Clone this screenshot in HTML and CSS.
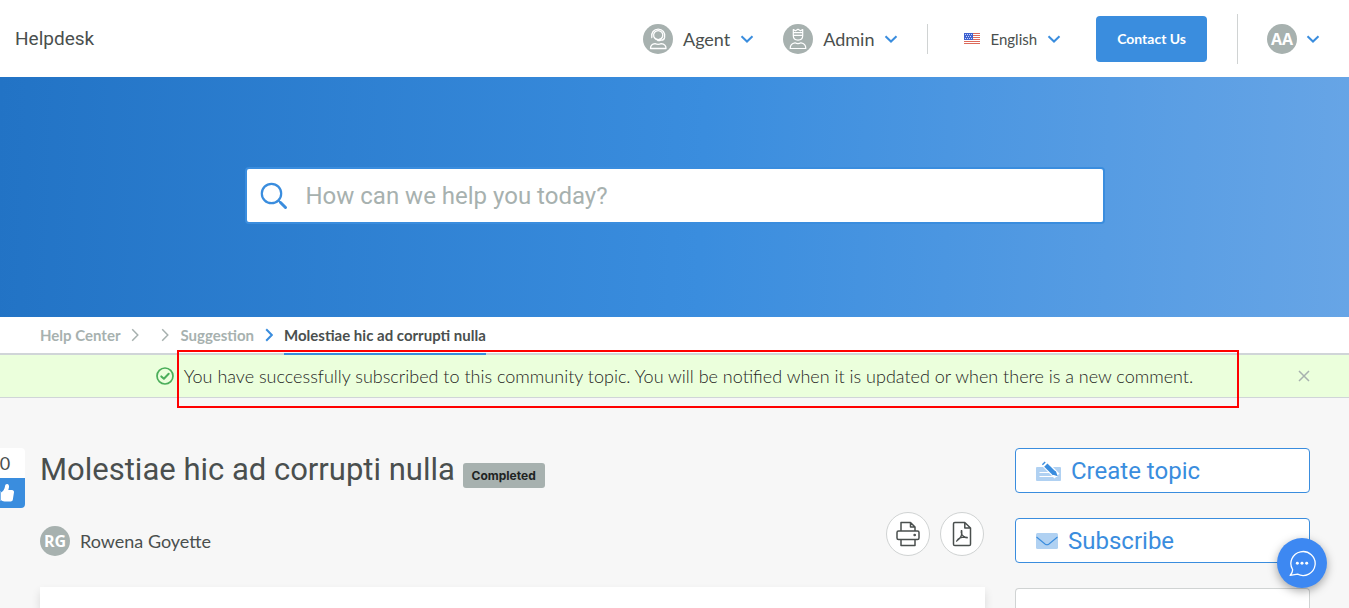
FILE: index.html
```html
<!DOCTYPE html>
<html lang="en">
<head>
<meta charset="utf-8">
<meta name="viewport" content="width=device-width, initial-scale=1">
<title>Molestiae hic ad corrupti nulla - Helpdesk</title>
<link rel="stylesheet" href="styles.css">
</head>
<body>
<header class="topbar">
  <a class="brand" href="#">Helpdesk</a>
  <nav class="topnav">
    <button class="menu" type="button">
      <svg class="avatar" viewBox="0 0 30 30" fill="none" stroke="#fff" stroke-width="1.3" stroke-linecap="round" stroke-linejoin="round">
        <circle cx="15" cy="15" r="15" fill="#a7b1af" stroke="none"/>
        <path d="M8.800 13.500c-1-5 2.200-8.300 6.400-8.300s7.400 3.300 6.400 8.300c-.4 1.700-1.800 2.700-3.400 2.700h-2.600"/>
        <path d="M10.800 12.500a4.600 4.600 0 1 1 8.800 0c-.6 1.800-2.200 3.200-4.400 3.200s-3.800-1.400-4.400-3.200z"/>
        <path d="M15 16.200h1.800" stroke-width="2"/>
        <path d="M7.500 24.500c0-3 1.600-4.600 4.500-4.900 2 .9 4.300.9 6.300 0 2.900.3 4.700 1.900 4.700 4.900z"/>
      </svg>
      <span>Agent</span>
      <svg class="chevron" viewBox="0 0 14 8"><path d="M1.500 1.200 7 6.500l5.500-5.300"/></svg>
    </button>
    <button class="menu" type="button">
      <svg class="avatar" viewBox="0 0 30 30" fill="none" stroke="#fff" stroke-width="1.200" stroke-linecap="round" stroke-linejoin="round">
        <circle cx="15" cy="15" r="15" fill="#a7b1af" stroke="none"/>
        <path d="M10.300 5.600 12.500 6.800 15 5.200l2.500 1.600 2.200-1.200v6.200c0 2.600-2 4.300-4.700 4.300s-4.700-1.700-4.700-4.300zM10.300 8.700h9.400M10.300 11.400h9.400"/>
        <path d="M7.200 24.500c0-3.400 1.700-5.300 4.800-5.700 1.800 1.100 4.200 1.100 6 0 3.100.4 4.800 2.300 4.800 5.700z"/>
      </svg>
      <span>Admin</span>
      <svg class="chevron" viewBox="0 0 14 8"><path d="M1.500 1.200 7 6.500l5.500-5.300"/></svg>
    </button>
    <span class="rule"></span>
    <button class="menu language" type="button">
      <svg class="flag" viewBox="0 0 16 11">
        <path fill="#fff" d="M0 0h16v11H0z"/>
        <path stroke="#dd6a5b" d="M0 .5h16M0 2.500h16M0 4.500h16M0 6.500h16M0 8.500h16M0 10.500h16"/>
        <path fill="#3f62cf" d="M0 0h9v7H0z"/>
        <path stroke="#c7d5ff" stroke-dasharray="1 1" d="M1 1.500h7M2 3.500h6M1 5.500h7"/>
      </svg>
      <span>English</span>
      <svg class="chevron" viewBox="0 0 14 8"><path d="M1.500 1.200 7 6.500l5.500-5.300"/></svg>
    </button>
    <a class="contact" href="#">Contact Us</a>
    <span class="rule rule-tall"></span>
    <button class="menu account" type="button" aria-label="Account">
      <span class="initials">AA</span>
      <svg class="chevron" viewBox="0 0 14 8"><path d="M1.500 1.200 7 6.500l5.500-5.300"/></svg>
    </button>
  </nav>
</header>

<section class="hero">
  <form class="search" role="search">
    <label for="q" aria-label="Search">
      <svg class="search-icon" viewBox="0 0 28 28" fill="none" stroke="#3a8dde" stroke-linecap="round"><circle cx="11.500" cy="11.500" r="9.700" stroke-width="2.200"/><path d="m18.600 18.600 1.500 1.500" stroke-width="2"/><path d="m20.500 20.500 5 5" stroke-width="3"/></svg>
    </label>
    <input id="q" type="search" placeholder="How can we help you today?">
  </form>
</section>

<nav class="crumbs" aria-label="Breadcrumb">
  <a href="#">Help Center</a>
  <svg class="sep" viewBox="0 0 8 14"><path d="m1.200 1.200 5.600 5.800-5.600 5.800"/></svg>
  <svg class="sep" viewBox="0 0 8 14"><path d="m1.200 1.200 5.600 5.800-5.600 5.800"/></svg>
  <a href="#">Suggestion</a>
  <svg class="sep sep-active" viewBox="0 0 8 14"><path d="m1.200 1.200 5.600 5.800-5.600 5.800"/></svg>
  <span class="current">Molestiae hic ad corrupti nulla</span>
</nav>

<div class="alert" role="status">
  <p class="alert-text">
    <svg class="check" viewBox="0 0 18 18" fill="none" stroke="#4bae5a" stroke-linecap="round" stroke-linejoin="round"><circle cx="9" cy="9" r="8" stroke-width="1.700"/><path d="m5.300 9.400 2.600 2.400 4.800-5" stroke-width="2"/></svg>
    You have successfully subscribed to this community topic. You will be notified when it is updated or when there is a new comment.
  </p>
  <button class="close" type="button" aria-label="Close"><svg viewBox="0 0 12 12"><path d="m1 1 10 10M11 1 1 11"/></svg></button>
  <span class="highlight"></span>
</div>

<main class="page">
  <aside class="vote">
    <span class="count">0</span>
    <button class="like" type="button" aria-label="Like">
      <svg viewBox="0 0 20 20"><path fill="#b9d7f5" d="M1 8h4.500v10H1z"/><path fill="#fff" d="M6 9.500C8 8.500 9.500 6.500 10 3.500 10.200 1.700 11 1 12 1c1.700.1 2.200 1.600 2 3.200L13.300 7H17c1.300 0 2.100 1 2 2.200l-1.200 7.600C17.600 18 16.800 18.500 15.800 18.500H9.500C8 18.500 6.500 17.500 6 17z"/></svg>
    </button>
  </aside>

  <article class="topic">
    <h1 class="title">Molestiae hic ad corrupti nulla <span class="badge">Completed</span></h1>
    <div class="meta">
      <a class="author" href="#"><span class="initials">RG</span>Rowena Goyette</a>
      <div class="tools">
        <button class="round" type="button" aria-label="Print">
          <svg viewBox="0 0 24 26" fill="none" stroke="#4a4f4e" stroke-width="1.500" stroke-linejoin="round"><path d="M5 10V1.500h9.500L19 6v4M14.500 1.500V6H19"/><rect x="1" y="10" width="22" height="8.500" rx="1.500"/><path d="M5 18.500v6h14v-6"/><circle cx="18.700" cy="14" r=".6"/></svg>
        </button>
        <button class="round" type="button" aria-label="Download PDF">
          <svg viewBox="0 0 24 26" fill="none" stroke="#4a4f4e" stroke-width="1.500" stroke-linejoin="round" stroke-linecap="round"><path d="M4.800 1.500h10L20.500 7v16.200c0 .8-.5 1.300-1.300 1.300H4.800c-.8 0-1.300-.5-1.300-1.300V2.800c0-.8.5-1.300 1.300-1.300zM14.800 1.500V7h5.700"/><path d="M11.300 9.500c-.8 2.700 1.500 7.100 6 7.300M11.800 9.500c.7 4-1.800 8.300-5.300 10.700M7 19.500c1.500-2.500 5.500-3.700 10.300-3.200" stroke-width="1.200"/></svg>
        </button>
      </div>
    </div>
    <div class="card"></div>
  </article>

  <aside class="side">
    <a class="action" href="#">
      <svg width="25" height="20" viewBox="0 0 25 20"><rect y="6" width="25" height="14" rx="1" fill="#b0d1f2"/><path d="M3.500 11.500h12M3.500 15.500h18" stroke="#fff" stroke-width="1.200"/><path d="m8 2 13 13" stroke="#fff" stroke-width="7"/><path d="m9.800 4.200 8.700 8.500" stroke="#3a8dde" stroke-width="4.600"/><path d="m16.300 13.500 3.500-3.500 1.900 5.200z" fill="#3a8dde"/><path d="m7.300 1.800 1 1" stroke="#3a8dde" stroke-width="4"/></svg>
      Create topic
    </a>
    <a class="action" href="#">
      <svg width="22" height="16" viewBox="0 0 22 16"><rect width="22" height="16" rx="1.500" fill="#b0d1f2"/><path d="m.5 4 8.800 7.200q1.700 1.200 3.400 0L21.500 4" fill="none" stroke="#3a8dde" stroke-width="1.100"/></svg>
      Subscribe
    </a>
    <div class="panel"></div>
  </aside>
</main>

<button class="chat" type="button" aria-label="Open chat">
  <svg viewBox="0 0 30 30" fill="none" stroke="#fff" stroke-width="1.400" stroke-linejoin="round"><path d="M5 22.200A13 12.800 0 1 1 10.300 27L2.300 28.300c1.500-1.800 2.700-3.800 2.700-6.100z"/><g fill="#fff" stroke="none"><circle cx="10" cy="15.300" r="1.600"/><circle cx="15" cy="15.300" r="1.600"/><circle cx="20" cy="15.300" r="1.600"/></g></svg>
</button>
</body>
</html>
```

FILE: styles.css
```css
* { box-sizing: border-box; }

body {
  margin: 0;
  min-height: 100vh;
  overflow: hidden;
  display: flex;
  flex-direction: column;
  background: #f7f7f7;
  color: #4a4f4e;
  font: 18px/24px Lato, "Liberation Sans", sans-serif;
}

a { color: inherit; text-decoration: none; }
button { margin: 0; padding: 0; border: 0; background: none; color: inherit; font: inherit; cursor: pointer; }
svg { display: block; flex: none; }

.topbar {
  display: flex;
  align-items: center;
  justify-content: space-between;
  height: 77px;
  padding: 0 29px 0 15px;
  background: #fff;
}
.brand { font: 19px/24px Roboto, sans-serif; }
.topnav { display: flex; align-items: center; }
.menu { display: flex; align-items: center; gap: 10px; margin-right: 29px; }
.avatar { width: 30px; height: 30px; }
.chevron { width: 14px; height: 8px; fill: none; stroke: #3a8dde; stroke-width: 2; }
.rule { width: 1px; height: 30px; background: #d0d3d3; }
.rule-tall { height: 50px; margin: 0 29px 0 30px; }
.language { margin: 0 35px 0 36px; font-size: 15px; }
.flag { width: 16px; height: 11px; }
.contact {
  padding: 11px 21px;
  border-radius: 4px;
  background: #3a8dde;
  color: #fff;
  font-size: 14px;
  font-weight: 700;
}
.account { gap: 9px; margin: 0; }
.initials {
  width: 30px;
  border-radius: 50%;
  background: #a7b1af;
  color: #fff;
  font: 700 16px/30px "Open Sans", sans-serif;
  text-align: center;
}

.hero {
  display: flex;
  justify-content: center;
  padding: 90px 20px 93px;
  background: linear-gradient(92deg, #2273c5 0%, #3a8dde 52%, #67a5e6 100%);
}
.search {
  display: flex;
  align-items: center;
  gap: 18px;
  width: 860px;
  height: 57px;
  padding: 0 13px;
  border: 2px solid #3a8dde;
  border-radius: 4px;
  background: #fff;
}
.search-icon { width: 28px; height: 28px; }
.search input {
  flex: 1;
  min-width: 0;
  padding: 0;
  border: 0;
  outline: 0;
  background: none;
  font: 24px/32px Roboto, sans-serif;
}
.search input::placeholder { color: #a7b1af; opacity: 1; }

.crumbs {
  display: flex;
  align-items: center;
  padding: 0 40px;
  border-bottom: 2px solid #d0d5d8;
  background: #fff;
  color: #a7b1af;
  font-size: 15px;
  font-weight: 700;
  line-height: 36px;
}
.sep { width: 8px; height: 14px; margin: 0 11px; fill: none; stroke: #a7b1af; stroke-width: 1.5; }
.sep-active { stroke: #3a8dde; stroke-width: 2; }
.current { margin-bottom: -2px; border-bottom: 2px solid #3a8dde; color: #4a4f4e; }

.alert {
  position: relative;
  display: grid;
  grid-template-columns: 1fr auto 1fr;
  align-items: center;
  padding: 9px 39px;
  border-bottom: 1px solid #d0d5d8;
  background: #ebffdc;
}
.alert-text { grid-column: 2; display: flex; align-items: center; gap: 10px; margin: 0; color: #1f2423; font-weight: 300; }
.check { width: 18px; height: 18px; }
.close { justify-self: end; }
.close svg { width: 12px; height: 12px; fill: none; stroke: #a7b1af; stroke-width: 1.5; }
.highlight {
  position: absolute;
  inset: -5px 110px -11px 177px;
  border: 2px solid #f00;
  pointer-events: none;
}

.page {
  position: relative;
  flex: 1;
  display: grid;
  grid-template-columns: 1fr 295px;
  gap: 30px;
  padding: 50px 39px 0 40px;
}
.vote {
  position: absolute;
  top: 50px;
  left: -15px;
  width: 40px;
  overflow: hidden;
  border-radius: 4px;
  background: #fff;
  text-align: center;
  line-height: 30px;
}
.count { display: block; }
.like { display: flex; align-items: center; justify-content: center; width: 100%; height: 30px; background: #3a8dde; }
.like svg { width: 20px; height: 20px; }

.topic { display: flex; flex-direction: column; }
.title { margin: 0; font: 31px/44px Roboto, sans-serif; }
.badge {
  display: inline-block;
  padding: 0 9px;
  border-radius: 3px;
  background: #a7b1af;
  color: #1f2423;
  font: 700 12px/25px Inter, sans-serif;
}
.meta { display: flex; align-items: flex-end; justify-content: space-between; margin-top: 20px; }
.author { display: flex; align-items: center; gap: 10px; }
.tools { display: flex; gap: 10px; margin-right: 1px; }
.round {
  display: flex;
  align-items: center;
  justify-content: center;
  width: 44px;
  height: 44px;
  border: 1px solid #d0d3d3;
  border-radius: 50%;
  background: #fff;
}
.round svg { width: 24px; height: 26px; }
.card { flex: 1; margin-top: 31px; background: #fff; box-shadow: 0 5px 10px rgba(0, 0, 0, .12); }

.side { display: flex; flex-direction: column; gap: 25px; }
.action {
  display: flex;
  align-items: center;
  gap: 10px;
  height: 45px;
  padding: 0 20px;
  border: 1px solid #3a8dde;
  border-radius: 4px;
  background: #fff;
  color: #3a8dde;
  font: 24px/32px Roboto, sans-serif;
}
.panel { flex: 1; border: 1px solid #d0d3d3; border-bottom: 0; border-radius: 4px 4px 0 0; background: #fff; }

.chat {
  position: fixed;
  right: 22px;
  bottom: 20px;
  display: flex;
  align-items: center;
  justify-content: center;
  width: 50px;
  height: 50px;
  border-radius: 50%;
  background: #3d88f2;
  box-shadow: 0 3px 10px rgba(0, 0, 0, .35);
}
.chat svg { width: 28px; height: 28px; }
```
